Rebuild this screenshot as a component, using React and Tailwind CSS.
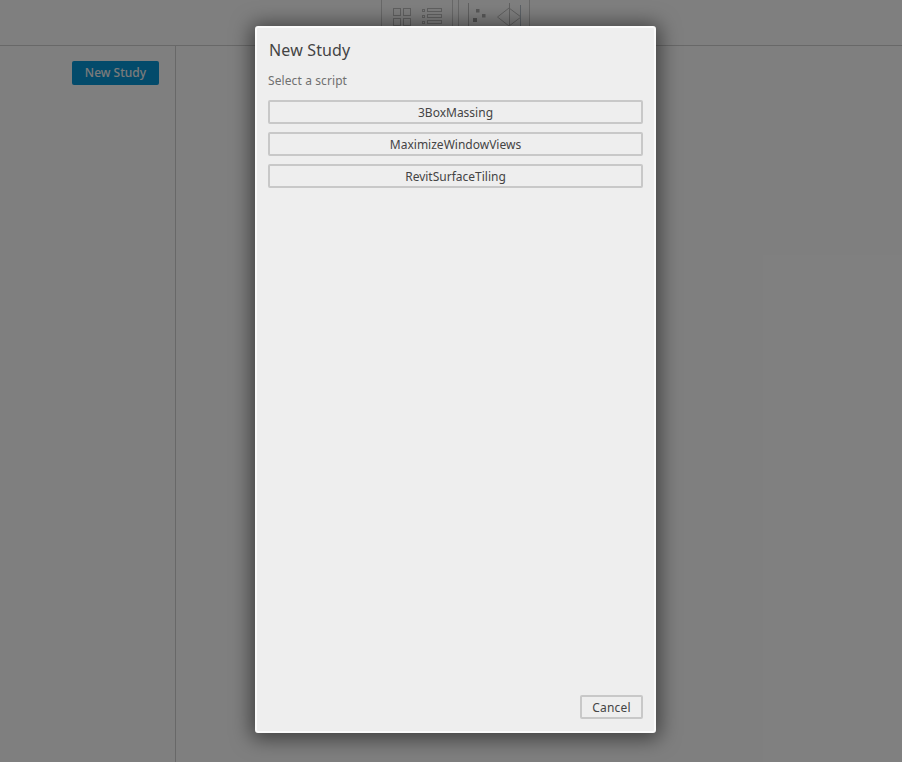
const scripts = ['3BoxMassing', 'MaximizeWindowViews', 'RevitSurfaceTiling']

function GridIcon() {
  return (
    <svg width="18" height="18" viewBox="0 0 18 18" fill="none" stroke="#c0c0c0" strokeWidth="1">
      <rect x="0.5" y="0.5" width="7" height="7" />
      <rect x="10.5" y="0.5" width="7" height="7" />
      <rect x="0.5" y="10.5" width="7" height="7" />
      <rect x="10.5" y="10.5" width="7" height="7" />
    </svg>
  )
}

function ListIcon() {
  return (
    <svg width="20" height="18" viewBox="0 0 20 18" fill="none" stroke="#c0c0c0" strokeWidth="1">
      <rect x="0.5" y="1.5" width="2" height="2" />
      <rect x="5.5" y="0.5" width="14" height="3" />
      <rect x="0.5" y="7.5" width="2" height="2" />
      <rect x="5.5" y="6.5" width="14" height="3" />
      <rect x="0.5" y="13.5" width="2" height="2" />
      <rect x="5.5" y="12.5" width="14" height="3" />
    </svg>
  )
}

function ScatterIcon() {
  return (
    <svg width="20" height="23" viewBox="0 0 20 23" fill="none">
      <path d="M0.5 0v23" stroke="#c0c0c0" />
      <rect x="8" y="6" width="3.5" height="3.5" fill="#b0b0b0" />
      <rect x="14" y="11" width="3.5" height="3.5" fill="#b0b0b0" />
      <rect x="5" y="15" width="4" height="4" fill="#a0a0a0" />
    </svg>
  )
}

function ParallelIcon() {
  return (
    <svg width="25" height="23" viewBox="0 0 25 23" fill="none" stroke="#c0c0c0">
      <path d="M0.5 14 L12 5 L24 14 L12 23 Z" />
      <path d="M12.5 0v23" />
      <path d="M23.5 2v21" stroke="#b8c2cc" />
    </svg>
  )
}

export default function App() {
  return (
    <div className="relative h-[762px] w-[902px] overflow-hidden bg-white font-['Noto_Sans',sans-serif]">
      <header className="flex h-[46px] justify-center gap-[5px] border-b border-[#d0d0d0] pl-[9px]">
        <div className="flex h-[45px] w-[72px] items-start gap-[11px] border-x border-[#d0d0d0] pl-[11px] pt-[8px]">
          <GridIcon />
          <ListIcon />
        </div>
        <div className="flex h-[45px] w-[72px] items-start gap-[9px] border-x border-[#d0d0d0] pl-[9px] pt-[3px]">
          <ScatterIcon />
          <ParallelIcon />
        </div>
      </header>
      <div className="flex h-[716px]">
        <aside className="w-[176px] border-r border-[#d0d0d0] pl-[72px] pt-[15px]">
          <button className="block h-[24px] w-[87px] rounded-[2px] bg-[#0696d7] text-[12px] font-medium text-[#f5f5f5]">
            New Study
          </button>
        </aside>
      </div>

      {/* dimmed backdrop + dialog */}
      <div className="absolute inset-0 flex items-start justify-center bg-black/50 pl-[9px] pt-[26px]">
        <div className="flex h-[707px] w-[401px] flex-col rounded-[3px] border-[2px] border-[#fbfbfb] bg-[#eeeeee] px-[11px] pb-[12px] pt-[11px] shadow-[0_2px_20px_4px_rgba(0,0,0,0.5)]">
          <h2 className="pl-[1px] text-[16px] leading-[22px] font-normal tracking-[0.15px] text-[#444444]">New Study</h2>
          <p className="mt-[11px] text-[12px] leading-[18px] tracking-[0.1px] text-[#707070]">Select a script</p>
          <div className="mt-[10px] flex flex-col gap-[8px]">
            {scripts.map((name) => (
              <button
                key={name}
                className="h-[24px] w-full rounded-[2px] border-[2px] border-[#c8c8c8] bg-[#eeeeee] pt-px text-[12px] leading-none text-[#444444]"
              >
                {name}
              </button>
            ))}
          </div>
          <div className="mt-auto flex justify-end">
            <button className="h-[24px] w-[63px] rounded-[2px] border-[2px] border-[#c8c8c8] bg-[#eeeeee] pt-px text-[12px] leading-none tracking-[0.2px] text-[#444444]">
              Cancel
            </button>
          </div>
        </div>
      </div>
    </div>
  )
}
